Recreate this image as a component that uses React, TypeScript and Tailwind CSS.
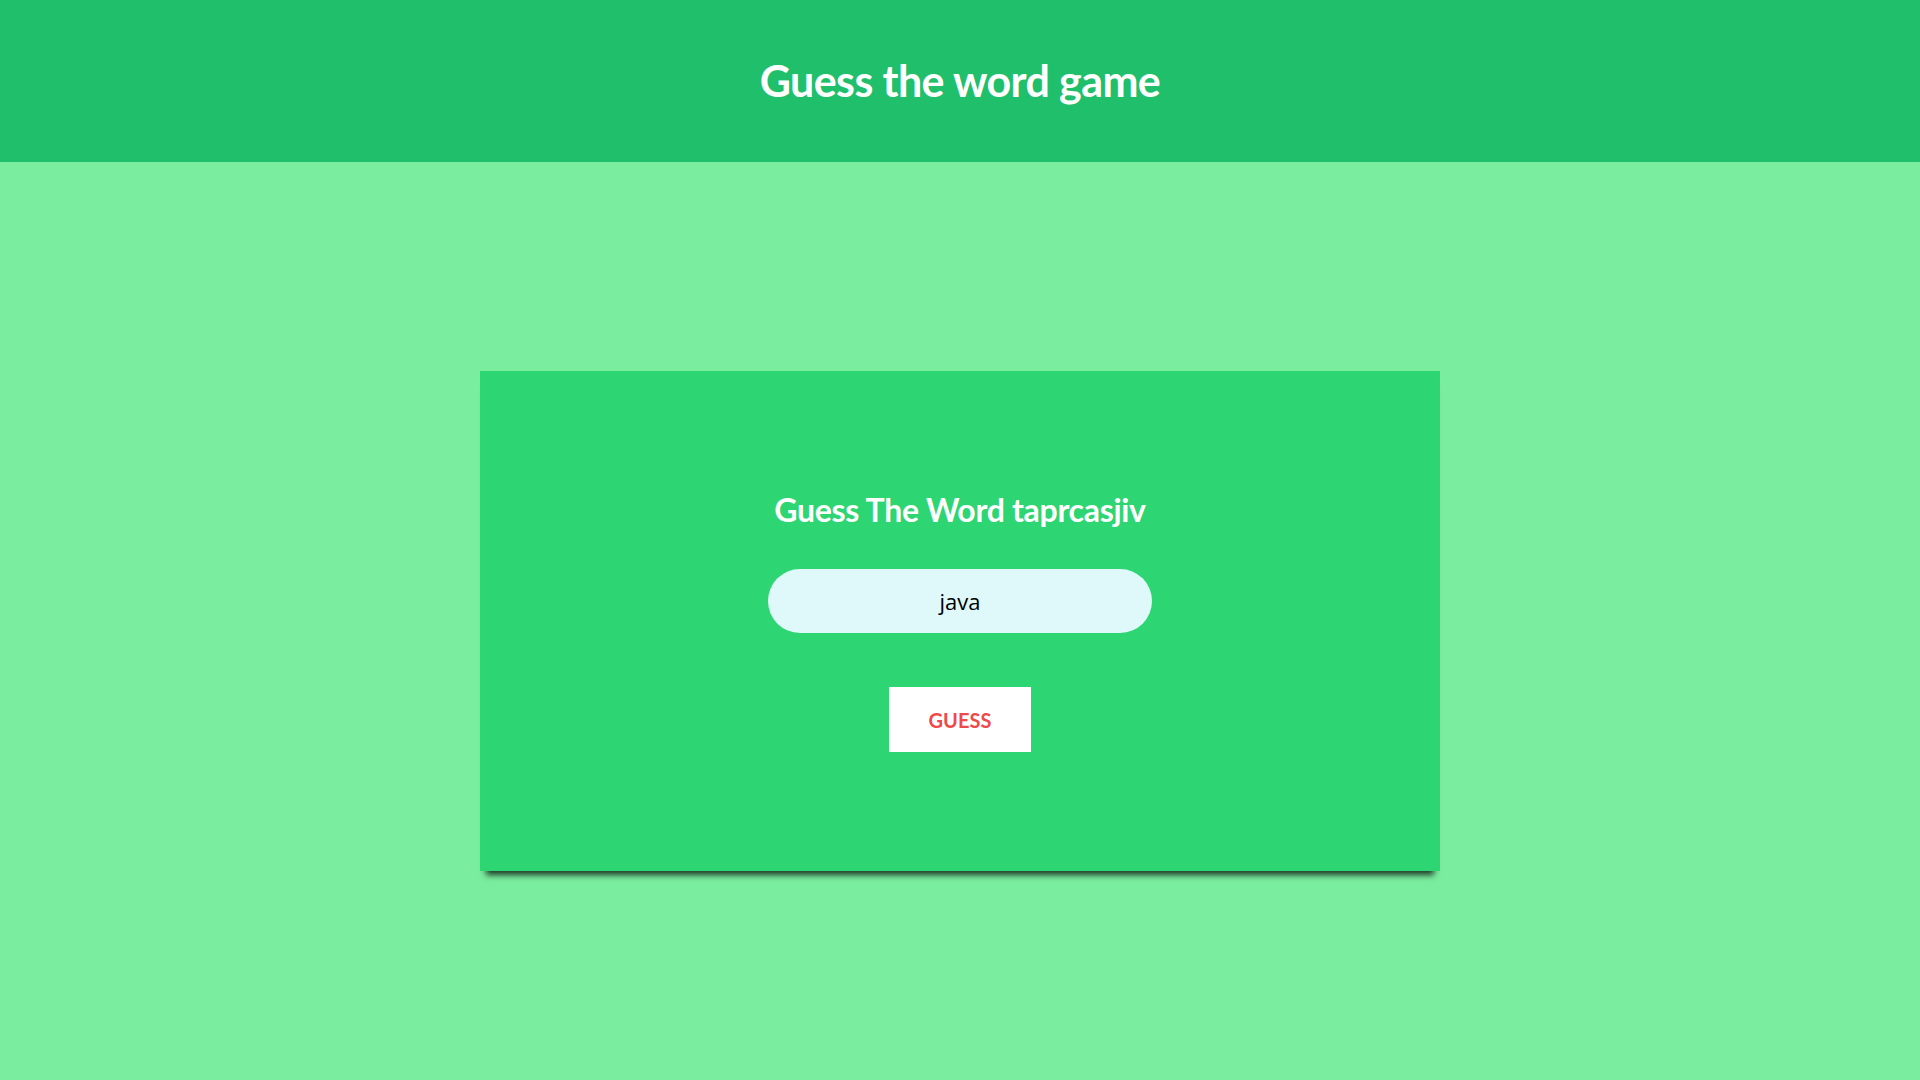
import { useState } from "react";

export default function App() {
  const [guess, setGuess] = useState("java");

  return (
    <div className="min-h-screen bg-[#7bed9f] font-['Lato',sans-serif]">
      <header className="flex h-[162px] items-center justify-center bg-[#20bf6b]">
        <h1 className="-mt-[2px] text-[43px] font-bold leading-none tracking-[-0.6px] text-white">
          Guess the word game
        </h1>
      </header>

      <main className="flex h-[918px] items-center justify-center">
        <div className="flex h-[500px] w-[960px] flex-col items-center justify-center bg-[#2ed573] shadow-[0_10px_6px_-6px_#1d3b27]">
          <h2 className="text-[32px] font-bold leading-[40px] tracking-[-0.3px] text-white">
            Guess The Word taprcasjiv
          </h2>
          <input
            value={guess}
            onChange={(e) => setGuess(e.target.value)}
            className="mt-[39px] h-[64px] w-[384px] rounded-full bg-[#dff9fb] text-center font-['Open_Sans',sans-serif] text-[22px] text-black outline-none"
          />
          <button className="mt-[54px] h-[65px] w-[142px] bg-white text-[20px] font-bold text-[#ee4a4a]">
            GUESS
          </button>
        </div>
      </main>
    </div>
  );
}
